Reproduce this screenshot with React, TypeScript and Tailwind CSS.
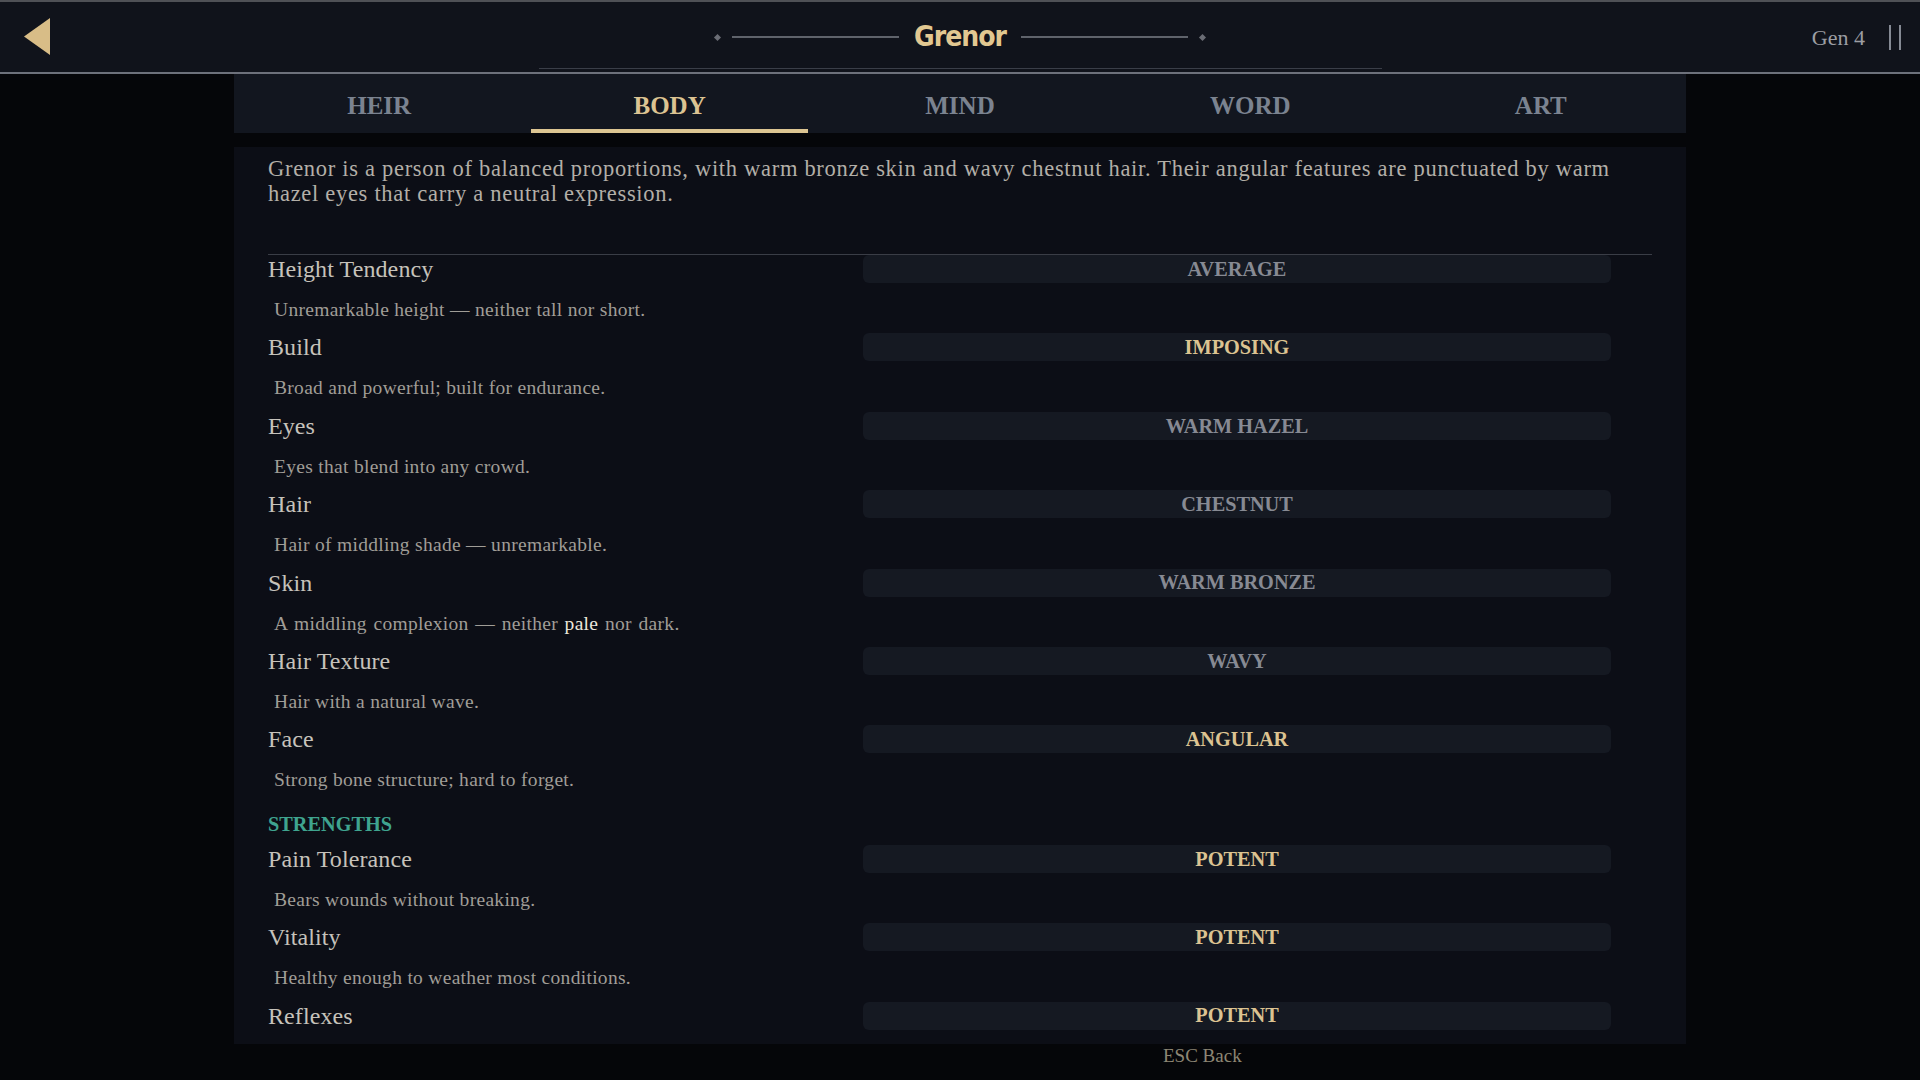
import { ReactNode } from 'react';

type Trait = {
  label: string;
  value: string;
  desc?: ReactNode;
  strong?: boolean;
};

const tabs = ['HEIR', 'BODY', 'MIND', 'WORD', 'ART'];
const activeTab = 'BODY';

const traits: Trait[] = [
  { label: 'Height Tendency', value: 'AVERAGE', desc: 'Unremarkable height — neither tall nor short.' },
  { label: 'Build', value: 'IMPOSING', desc: 'Broad and powerful; built for endurance.', strong: true },
  { label: 'Eyes', value: 'WARM HAZEL', desc: 'Eyes that blend into any crowd.' },
  { label: 'Hair', value: 'CHESTNUT', desc: 'Hair of middling shade — unremarkable.' },
  {
    label: 'Skin',
    value: 'WARM BRONZE',
    desc: (
      <span className="[word-spacing:1.5px]">
        A middling complexion — neither <span className="text-[#ece7dc]">pale</span> nor dark.
      </span>
    ),
  },
  { label: 'Hair Texture', value: 'WAVY', desc: 'Hair with a natural wave.' },
  { label: 'Face', value: 'ANGULAR', desc: 'Strong bone structure; hard to forget.', strong: true },
];

const strengths: Trait[] = [
  { label: 'Pain Tolerance', value: 'POTENT', desc: 'Bears wounds without breaking.', strong: true },
  { label: 'Vitality', value: 'POTENT', desc: 'Healthy enough to weather most conditions.', strong: true },
  { label: 'Reflexes', value: 'POTENT', strong: true },
];

const TraitRow = ({ trait }: { trait: Trait }) => (
  <div className="h-[78.4px] shrink-0">
    <div className="flex h-[28px] items-center">
      <div className="w-[595px] text-[24px] leading-[28px] tracking-[0.1px] text-[#c6c2bb]">{trait.label}</div>
      <div
        className={`flex h-[28px] w-[748px] items-center justify-center rounded-[6px] bg-[#151922] text-[20.3px] font-bold leading-none ${
          trait.strong ? 'text-[#dcc391]' : 'text-[#878a93]'
        }`}
      >
        {trait.value}
      </div>
    </div>
    {trait.desc && (
      <div className="mt-[15px] pl-[6px] text-[19.5px] leading-[24px] tracking-[0.3px] text-[#a09d97]">
        {trait.desc}
      </div>
    )}
  </div>
);

const BackArrow = () => (
  <svg width="30" height="40" viewBox="0 0 30 40" className="ml-[22px]">
    <path d="M2 19.5 L28 1 L28 38 Z" fill="#d8bd87" />
  </svg>
);

const Diamond = () => <div className="h-[5px] w-[5px] rotate-45 bg-[#6a6d75]" />;

export default function App() {
  return (
    <div className="relative flex h-[1080px] w-[1920px] flex-col overflow-hidden bg-[#050609] font-['Liberation_Serif','Times_New_Roman',serif]">
      {/* top bar */}
      <header className="grid h-[74px] shrink-0 grid-cols-[1fr_843px_1fr] border-t-2 border-b-2 border-t-[#4f5156] border-b-[#6d717b] bg-[#10131b]">
        <div className="flex items-center">
          <BackArrow />
        </div>
        <div className="flex h-full flex-col">
          <div className="flex flex-1 items-center justify-center pt-[4px]">
            <Diamond />
            <div className="ml-[12px] h-[2px] w-[167px] bg-[#5f636b]" />
            <h1 className="mx-[15px] font-['DejaVu_Sans_Condensed','DejaVu_Sans',sans-serif] text-[28px] font-bold leading-none tracking-[-1px] text-[#e2c891]">
              Grenor
            </h1>
            <div className="mr-[12px] h-[2px] w-[167px] bg-[#5f636b]" />
            <Diamond />
          </div>
          <div className="mb-[3px] h-px bg-[#3a3e48]" />
        </div>
        <div className="flex items-center justify-end pr-[19px]">
          <span className="text-[22px] text-[#9c9ea3]">Gen 4</span>
          <div className="ml-[24px] flex h-[25px] gap-[8px]">
            <div className="w-[2px] bg-[#858a94]" />
            <div className="w-[2px] bg-[#858a94]" />
          </div>
        </div>
      </header>

      <main className="mx-auto flex w-[1452px] flex-col">
        {/* tabs */}
        <nav className="grid h-[59px] grid-cols-5 bg-[#12161f]">
          {tabs.map((tab) => (
            <div key={tab} className="relative flex items-center justify-center pt-[5px]">
              <span
                className={`text-[25px] font-bold ${tab === activeTab ? 'text-[#dcc392]' : 'text-[#7b8390]'}`}
              >
                {tab}
              </span>
              {tab === activeTab && (
                <div className="absolute bottom-0 left-[7px] right-[7px] h-[4px] bg-[#dcc592]" />
              )}
            </div>
          ))}
        </nav>

        {/* body sheet */}
        <section className="mt-[14px] flex h-[897px] flex-col overflow-hidden bg-[#0c0e16] px-[34px] pt-[9px]">
          <p className="text-[22.5px] leading-[25px] tracking-[0.7px] text-[#b3afa8]">
            Grenor is a person of balanced proportions, with warm bronze skin and wavy chestnut hair. Their angular
            features are punctuated by warm hazel eyes that carry a neutral expression.
          </p>
          <div className="mt-[48px] h-px shrink-0 bg-[#3a3d46]" />
          {traits.map((t) => (
            <TraitRow key={t.label} trait={t} />
          ))}
          <div className="mt-[8px] shrink-0 text-[20.3px] font-bold leading-[24px] text-[#3fa48f]">STRENGTHS</div>
          <div className="mt-[9px] flex flex-col">
            {strengths.map((t) => (
              <TraitRow key={t.label} trait={t} />
            ))}
          </div>
        </section>
      </main>

      <footer className="pl-[1163px] text-[19px] leading-[24px] text-[#8d8674]">ESC Back</footer>
    </div>
  );
}
